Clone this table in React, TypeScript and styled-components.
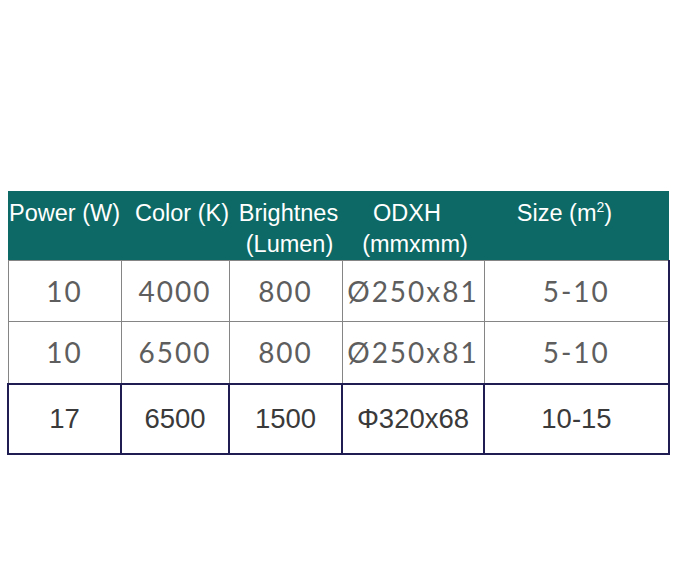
import styled, { createGlobalStyle } from "styled-components";

const GlobalStyle = createGlobalStyle`
  html, body {
    margin: 0;
    padding: 0;
    background: #ffffff;
  }
`;

const Page = styled.div`
  padding: 191px 0 0 7px;
  width: 680px;
  height: 588px;
  box-sizing: border-box;
`;

const Table = styled.table`
  border-collapse: collapse;
  table-layout: fixed;
  width: 661px;
`;

const HeadCell = styled.th`
  background: #0d6965;
  color: #ffffff;
  font-family: "Liberation Sans", Arial, sans-serif;
  font-weight: normal;
  font-size: 23.5px;
  line-height: 31px;
  height: 68px;
  padding: 7px 0 0;
  box-sizing: border-box;
  vertical-align: top;
  white-space: nowrap;
  overflow: visible;
`;

const HeadLine = styled.span<{ $shift?: number }>`
  display: block;
  text-align: center;
  padding-left: ${({ $shift = 0 }) => ($shift > 0 ? $shift * 2 : 0)}px;
  padding-right: ${({ $shift = 0 }) => ($shift < 0 ? -$shift * 2 : 0)}px;
`;

const Sup = styled.sup`
  font-size: 14px;
  vertical-align: 9px;
  line-height: 0;
`;

const Cell = styled.td<{ $strong?: boolean; $last?: boolean }>`
  text-align: center;
  vertical-align: middle;
  padding: 0;
  white-space: nowrap;
  font-family: ${({ $strong }) =>
    $strong ? `"Liberation Sans", Arial, sans-serif` : `Lato, "Open Sans", sans-serif`};
  font-weight: 400;
  font-size: ${({ $strong }) => ($strong ? 27.5 : 28)}px;
  letter-spacing: ${({ $strong }) => ($strong ? 0 : 2)}px;
  color: ${({ $strong }) => ($strong ? "#3a3a3a" : "#5e5e5e")};
  border: ${({ $strong }) => ($strong ? "2px solid #201d52" : "1px solid #858585")};
  ${({ $last }) => ($last ? "border-right: 2px solid #201d52;" : "")}
`;

const Row = styled.tr<{ $height: number }>`
  height: ${({ $height }) => $height}px;
`;

const headers: { lines: { text: React.ReactNode; shift: number }[]; width: number }[] = [
  { lines: [{ text: "Power (W)", shift: 0 }], width: 113 },
  { lines: [{ text: "Color (K)", shift: 7 }], width: 108 },
  {
    lines: [
      { text: "Brightnes", shift: 3 },
      { text: "(Lumen)", shift: 4 },
    ],
    width: 113,
  },
  {
    lines: [
      { text: "ODXH", shift: -6 },
      { text: "(mmxmm)", shift: 2 },
    ],
    width: 142,
  },
  {
    lines: [
      {
        text: (
          <>
            Size (m<Sup>2</Sup>)
          </>
        ),
        shift: -12,
      },
    ],
    width: 185,
  },
];

const rows = [
  { cells: ["10", "4000", "800", "Ø250x81", "5-10"], strong: false, height: 61 },
  { cells: ["10", "6500", "800", "Ø250x81", "5-10"], strong: false, height: 62 },
  { cells: ["17", "6500", "1500", "Φ320x68", "10-15"], strong: true, height: 70 },
];

export default function App() {
  return (
    <Page>
      <GlobalStyle />
      <Table>
        <colgroup>
          {headers.map((h, i) => (
            <col key={i} style={{ width: h.width }} />
          ))}
        </colgroup>
        <thead>
          <tr>
            {headers.map((h, i) => (
              <HeadCell key={i}>
                {h.lines.map((l, j) => (
                  <HeadLine key={j} $shift={l.shift}>
                    {l.text}
                  </HeadLine>
                ))}
              </HeadCell>
            ))}
          </tr>
        </thead>
        <tbody>
          {rows.map((r, i) => (
            <Row key={i} $height={r.height}>
              {r.cells.map((c, j) => (
                <Cell key={j} $strong={r.strong} $last={j === r.cells.length - 1}>
                  {c}
                </Cell>
              ))}
            </Row>
          ))}
        </tbody>
      </Table>
    </Page>
  );
}
